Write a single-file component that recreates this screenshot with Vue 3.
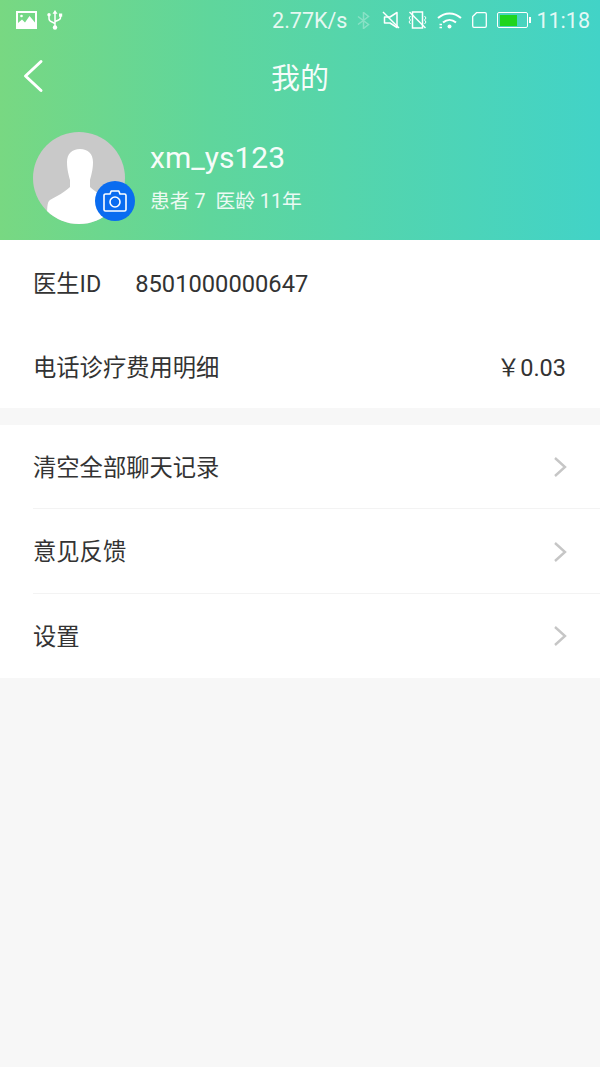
<script setup>
const infoRows = [
  { label: '医生ID', id: '8501000000647' },
  { label: '电话诊疗费用明细', amount: '\uFFE50.03' }
]
const menuRows = ['清空全部聊天记录', '意见反馈', '设置']
</script>

<template>
  <div class="page">
    <header class="header">
      <div class="status-bar">
        <div class="status-left">
          <svg class="img-icon" width="21" height="18" viewBox="0 0 21 18">
            <path fill="#fff" fill-rule="evenodd" d="M0 0h21v18H0zM2 2v10l4-3.500 3 3 4.500-6.500 5.500 6.500V2z" />
            <circle cx="5.500" cy="5" r="1.300" fill="#fff" />
          </svg>
          <svg width="16" height="20" viewBox="0 0 16 20" fill="none" stroke="#fff" stroke-width="1.500">
            <path d="M8 3v14" />
            <path d="M2 6v2.500c0 2 1.500 3 3 3.500l3 1.500" />
            <path d="M13.500 6v1.500c0 1.500-1.500 2.500-3 3L8 11.500" />
            <path d="M8 0l2.500 3.800H5.500z" fill="#fff" stroke="none" />
            <circle cx="8" cy="17.500" r="2.200" fill="#fff" stroke="none" />
            <circle cx="2" cy="4.800" r="1.700" fill="#fff" stroke="none" />
            <path d="M12 3.500h3.200v3.200H12z" fill="#fff" stroke="none" />
          </svg>
        </div>
        <div class="status-right">
          <span class="speed">2.77K/s</span>
          <svg class="bt" width="15" height="17" viewBox="0 0 15 17" fill="none" stroke="#fff" stroke-width="1.500">
            <path d="M2 4.500l10.500 8-5 4V.500l5 4-10.500 8" />
          </svg>
          <svg class="mute" width="18" height="18" viewBox="0 0 18 18" fill="none" stroke="#fff" stroke-width="1.500">
            <path d="M15 1.500L8 6H2.500v6H8l7 4.500z" stroke-linejoin="round" />
            <path d="M1 1l16 16" />
          </svg>
          <svg class="vibrate" width="19" height="18" viewBox="0 0 19 18" fill="none" stroke="#fff" stroke-width="1.500">
            <path d="M4.500 1h10v16h-10z" />
            <path d="M1.500 1l16 16" />
            <path d="M2.500 5L1 7l1.500 2L1 11l1.500 2M16.500 5L18 7l-1.500 2L18 11l-1.500 2" stroke-width="1" />
          </svg>
          <svg class="wifi" width="25" height="17" viewBox="0 0 25 17" fill="none" stroke="#fff" stroke-width="2">
            <path d="M1 6c7-6 16-6 23 0" />
            <path d="M6 10.500c4-3.500 9-3.500 13 0" />
            <circle cx="12.500" cy="14.500" r="2" fill="#fff" stroke="none" />
            <path d="M2.500 12.500h2.500M2.500 15.500h2.500" stroke-width="1.300" />
          </svg>
          <svg class="sim" width="15" height="16" viewBox="0 0 15 16" fill="none" stroke="#fff" stroke-width="1.300">
            <path d="M4.500 .700H13a1.300 1.300 0 0 1 1.300 1.300v12a1.300 1.300 0 0 1-1.300 1.300H2A1.300 1.300 0 0 1 .700 14V4.500z" stroke-linejoin="round" />
          </svg>
          <div class="battery"><div class="battery-fill"></div></div>
          <span class="clock">11:18</span>
        </div>
      </div>

      <div class="nav">
        <svg class="back" width="24" height="36" viewBox="0 0 24 36" fill="none" stroke="#fff" stroke-width="3" stroke-linecap="round" stroke-linejoin="round">
          <path d="M20 3.500L4.500 18 20 32.500" />
        </svg>
        <h1 class="title">我的</h1>
      </div>

      <div class="profile">
        <div class="avatar-wrap">
          <div class="avatar">
            <svg width="92" height="92" viewBox="0 0 92 92">
              <path fill="#fff" d="M34 30c0-8 5-13 13-13s13 5 13 13c0 8-2 14-3 18v7c5 5 13 9 20 13 3 2 3 8 3 24H14c0-16 0-22 3-24 7-4 15-8 20-13v-7c-1-4-3-10-3-18z" />
            </svg>
          </div>
          <div class="camera">
            <svg width="24" height="22" viewBox="0 0 24 22" fill="none" stroke="#fff" stroke-width="1.600" stroke-linejoin="round">
              <path d="M1 5.500A1.500 1.500 0 0 1 2.500 4H7l1.200-3h7.600L17 4h4.500A1.500 1.500 0 0 1 23 5.500v14a1.500 1.500 0 0 1-1.500 1.500h-19A1.500 1.500 0 0 1 1 19.500z" />
              <circle cx="12" cy="12" r="5" />
            </svg>
          </div>
        </div>
        <div class="profile-text">
          <div class="name">xm_ys123</div>
          <div class="meta">患者 7&nbsp; 医龄 11年</div>
        </div>
      </div>
    </header>

    <section class="group">
      <div v-for="row in infoRows" :key="row.label" class="row">
        <span class="label">{{ row.label }}</span>
        <span v-if="row.id" class="doctor-id">{{ row.id }}</span>
        <span v-if="row.amount" class="amount">{{ row.amount }}</span>
      </div>
    </section>

    <section class="group menu">
      <div v-for="item in menuRows" :key="item" class="row">
        <span class="label">{{ item }}</span>
        <svg class="chevron" width="14" height="22" viewBox="0 0 14 22" fill="none" stroke="#c6c6c6" stroke-width="2.400">
          <path d="M2 2l10 9-10 9" />
        </svg>
      </div>
    </section>
  </div>
</template>

<style>
html, body {
  margin: 0;
  background: #f7f7f7;
}
</style>

<style scoped>
.page {
  width: 600px;
  height: 1067px;
  overflow: hidden;
  background: #f7f7f7;
  font-family: Roboto, "Noto Sans CJK SC", sans-serif;
  color: #333;
}

.header {
  height: 240px;
  background: linear-gradient(90deg, #78d882 0%, #5fd69c 35%, #42d3c7 100%);
  color: #fff;
}

.status-bar {
  height: 40px;
  display: flex;
  align-items: center;
  justify-content: space-between;
  padding: 0 10px 0 16px;
}

.status-left,
.status-right {
  display: flex;
  align-items: center;
}

.status-left {
  gap: 10px;
}

.speed,
.clock {
  font-size: 21.500px;
  opacity: 0.85;
}

.bt {
  margin-left: 9px;
  opacity: 0.3;
}

.mute {
  margin-left: 11px;
}

.vibrate {
  margin-left: 8px;
}

.wifi {
  margin-left: 10px;
}

.sim {
  margin-left: 10px;
}

.battery {
  width: 31px;
  height: 16px;
  margin: 0 8px 0 10px;
  padding: 1.500px;
  border: 1.500px solid #fff;
  border-radius: 2px;
  box-sizing: border-box;
  position: relative;
}

.battery::after {
  content: "";
  position: absolute;
  right: -4px;
  top: 3.500px;
  width: 2px;
  height: 6px;
  background: #fff;
}

.battery-fill {
  width: 17px;
  height: 100%;
  background: #1fd51f;
}

.nav {
  height: 72px;
  display: flex;
  align-items: center;
  justify-content: center;
  position: relative;
}

.back {
  position: absolute;
  left: 21px;
  top: 18px;
}

.title {
  margin: 0;
  font-size: 29px;
  font-weight: 400;
  opacity: 0.95;
}

.profile {
  display: flex;
  align-items: center;
  gap: 25px;
  padding: 20px 0 0 33px;
}

.avatar-wrap {
  position: relative;
  width: 92px;
  height: 92px;
}

.avatar {
  width: 92px;
  height: 92px;
  border-radius: 50%;
  background: #c9c9c9;
  overflow: hidden;
}

.avatar svg {
  display: block;
}

.camera {
  position: absolute;
  right: -10px;
  bottom: 3px;
  width: 40px;
  height: 40px;
  border-radius: 50%;
  background: #0a6cf0;
  display: flex;
  align-items: center;
  justify-content: center;
}

.name {
  font-size: 30px;
  line-height: 36px;
  margin-top: -1px;
  opacity: 0.95;
}

.meta {
  margin-top: 13px;
  font-size: 19.800px;
  line-height: 26px;
  opacity: 0.88;
}

.group {
  background: #fff;
}

.menu {
  margin-top: 17px;
}

.row {
  height: 84px;
  margin-left: 33px;
  padding: 2px 34px 0 0;
  display: flex;
  align-items: baseline;
  box-sizing: border-box;
  font-size: 23.300px;
  line-height: 84px;
}

.menu .row {
  height: 84.400px;
  padding-top: 1px;
  border-bottom: 1px solid #f3f3f3;
}

.menu .row:last-child {
  border-bottom: none;
}

.doctor-id {
  margin-left: 34px;
  font-size: 23.700px;
}

.amount {
  margin-left: auto;
  font-size: 23.500px;
}

.chevron {
  margin: 0 -1px 0 auto;
  align-self: center;
}
</style>
